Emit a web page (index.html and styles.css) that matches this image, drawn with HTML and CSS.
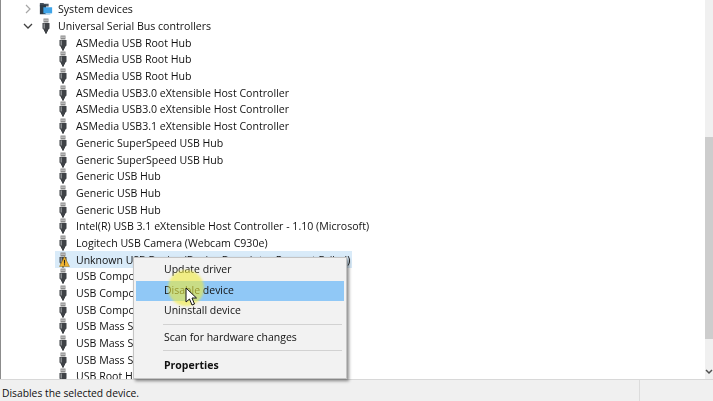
FILE: index.html
```html
<!DOCTYPE html>
<html lang="en">
<head>
<meta charset="utf-8">
<title>Device Manager</title>
<link rel="stylesheet" href="styles.css">
</head>
<body>
<svg class="defs" width="0" height="0" aria-hidden="true">
  <defs>
    <symbol id="usb" viewBox="0 0 12 16">
      <rect x="3.5" y="0.5" width="5" height="4" fill="#8b8b8b"/>
      <rect x="4.5" y="1.5" width="1" height="1.5" fill="#e8e8e8"/>
      <rect x="6.5" y="1.5" width="1" height="1.5" fill="#e8e8e8"/>
      <path d="M2.5 5h7v5.5l-1.5 1.5v1.5h-1v2h-2v-2h-1V12l-1.500-1.500z" fill="#3f4246"/>
      <rect x="3.500" y="5.500" width="1.500" height="5" fill="#8a8d90"/>
    </symbol>
  </defs>
</svg>
<div class="app">
  <div class="content">
    <div class="tree">
      <div class="row depth1">
        <svg class="chev" viewBox="0 0 10 10"><path d="M3 1l4 4-4 4" fill="none" stroke="#a6a6a6" stroke-width="1.200"/></svg>
        <svg class="icon" viewBox="0 0 16 16"><path d="M1 1h4l1 1h5v3H1z" fill="#4a5560"/><rect x="1" y="3" width="7" height="11" fill="#2e3b46"/><rect x="5" y="6" width="10" height="7" fill="#3fa4e8"/><rect x="7" y="13" width="6" height="1.500" fill="#9fc9e6"/></svg>
        <span>System devices</span>
      </div>
      <div class="row depth1">
        <svg class="chev" viewBox="0 0 10 10"><path d="M1 3l4 4 4-4" fill="none" stroke="#404040" stroke-width="1.300"/></svg>
        <svg class="icon"><use href="#usb"/></svg>
        <span>Universal Serial Bus controllers</span>
      </div>
      <div class="row depth2"><svg class="icon"><use href="#usb"/></svg><span>ASMedia USB Root Hub</span></div>
      <div class="row depth2"><svg class="icon"><use href="#usb"/></svg><span>ASMedia USB Root Hub</span></div>
      <div class="row depth2"><svg class="icon"><use href="#usb"/></svg><span>ASMedia USB Root Hub</span></div>
      <div class="row depth2"><svg class="icon"><use href="#usb"/></svg><span>ASMedia USB3.0 eXtensible Host Controller</span></div>
      <div class="row depth2"><svg class="icon"><use href="#usb"/></svg><span>ASMedia USB3.0 eXtensible Host Controller</span></div>
      <div class="row depth2"><svg class="icon"><use href="#usb"/></svg><span>ASMedia USB3.1 eXtensible Host Controller</span></div>
      <div class="row depth2"><svg class="icon"><use href="#usb"/></svg><span>Generic SuperSpeed USB Hub</span></div>
      <div class="row depth2"><svg class="icon"><use href="#usb"/></svg><span>Generic SuperSpeed USB Hub</span></div>
      <div class="row depth2"><svg class="icon"><use href="#usb"/></svg><span>Generic USB Hub</span></div>
      <div class="row depth2"><svg class="icon"><use href="#usb"/></svg><span>Generic USB Hub</span></div>
      <div class="row depth2"><svg class="icon"><use href="#usb"/></svg><span>Generic USB Hub</span></div>
      <div class="row depth2"><svg class="icon"><use href="#usb"/></svg><span>Intel(R) USB 3.1 eXtensible Host Controller - 1.10 (Microsoft)</span></div>
      <div class="row depth2"><svg class="icon"><use href="#usb"/></svg><span>Logitech USB Camera (Webcam C930e)</span></div>
      <div class="row depth2 selected">
        <span class="iconwrap">
          <svg class="icon"><use href="#usb"/></svg>
          <svg class="warn" viewBox="0 0 10 10"><path d="M5 .5l4.500 9h-9z" fill="#f2b632" stroke="#8a6a1c" stroke-width=".5"/><rect x="4.500" y="3.500" width="1" height="3.500" fill="#222"/><rect x="4.500" y="7.500" width="1" height="1" fill="#222"/></svg>
        </span>
        <span class="selected-text">Unknown USB Device (Device Descriptor Request Failed)</span>
      </div>
      <div class="row depth2"><svg class="icon"><use href="#usb"/></svg><span>USB Composite Device</span></div>
      <div class="row depth2"><svg class="icon"><use href="#usb"/></svg><span>USB Composite Device</span></div>
      <div class="row depth2"><svg class="icon"><use href="#usb"/></svg><span>USB Composite Device</span></div>
      <div class="row depth2"><svg class="icon"><use href="#usb"/></svg><span>USB Mass Storage Device</span></div>
      <div class="row depth2"><svg class="icon"><use href="#usb"/></svg><span>USB Mass Storage Device</span></div>
      <div class="row depth2"><svg class="icon"><use href="#usb"/></svg><span>USB Mass Storage Device</span></div>
      <div class="row depth2"><svg class="icon"><use href="#usb"/></svg><span>USB Root Hub (USB 3.0)</span></div>
    </div>
    <div class="scrollbar">
      <div class="track-top"></div>
      <div class="thumb"></div>
      <div class="track-bottom">
        <svg class="scroll-arrow" viewBox="0 0 8 6"><path d="M1 1l3 3 3-3" fill="none" stroke="#505050" stroke-width="1.500"/></svg>
      </div>
    </div>
  </div>
  <div class="status">
    <div class="status-main">Disables the selected device.</div>
    <div class="status-cell"></div>
  </div>
</div>
<div class="menu">
  <div class="item">Update driver</div>
  <div class="item active">Disable device</div>
  <div class="item">Uninstall device</div>
  <div class="sep"></div>
  <div class="item scan">Scan for hardware changes</div>
  <div class="sep"></div>
  <div class="item strong">Properties</div>
</div>
<div class="spot"></div>
<svg class="cursor" viewBox="0 0 12 19"><path d="M1 1v14l3.500-3 2.500 6 2.500-1-2.500-6h4.500z" fill="#fff" stroke="#111" stroke-width="1"/></svg>
</body>
</html>
```
FILE: styles.css
```css
* { box-sizing: border-box; }
html, body { margin: 0; padding: 0; }
body {
  width: 713px;
  height: 401px;
  overflow: hidden;
  background: #fff;
  font-family: "Open Sans", "Noto Sans", sans-serif;
  font-size: 10.6px;
  color: #111;
  position: relative;
}
.defs { position: absolute; }
.app {
  width: 713px;
  height: 401px;
  display: flex;
  flex-direction: column;
  filter: blur(0.35px);
}
.content {
  flex: 0 0 379px;
  height: 379px;
  display: flex;
  overflow: hidden;
  border-left: 1px solid #8c8c8c;
}
.tree {
  flex: 1;
  padding-top: 1px;
  overflow: hidden;
}
.row {
  height: 16.7px;
  display: flex;
  align-items: center;
  white-space: nowrap;
}
.depth1 { padding-left: 22px; }
.depth2 { padding-left: 56px; }
.chev { width: 10px; height: 10px; flex: none; margin-right: 6px; }
.icon { width: 12px; height: 16px; flex: none; margin-right: 7px; }
.depth1 .icon { width: 14px; height: 16px; margin-right: 5px; }
.selected {
  background: #d9ebf9;
  width: 297px;
  margin-left: 54px;
  padding-left: 2px;
}
.selected-text { font-size: 10.5px; }
.iconwrap { position: relative; display: flex; flex: none; }
.warn { position: absolute; left: 2px; top: 4px; width: 11px; height: 11px; }
.scrollbar {
  flex: 0 0 8px;
  display: flex;
  flex-direction: column;
  background: #f0f0f0;
}
.track-top { height: 137px; }
.thumb { height: 202px; background: #cdcdcd; }
.track-bottom { flex: 1; position: relative; display: flex; align-items: flex-end; padding-bottom: 4px; }
.scroll-arrow { width: 8px; height: 6px; }
.status {
  flex: 1;
  display: flex;
  background: #f0f0f0;
  border-top: 1px solid #d8d8d8;
}
.status-main {
  flex: 0 0 640px;
  padding: 6px 0 0 2px;
  font-size: 10.3px;
  border-right: 1px solid #dcdcdc;
}
.status-cell { flex: 1; }
.menu {
  position: absolute;
  left: 133px;
  top: 257px;
  width: 214px;
  height: 122px;
  padding: 2px;
  background: #f2f2f2;
  border: 1px solid #c4c4c4;
  box-shadow: 2px 2px 3px rgba(0,0,0,.45);
  filter: blur(0.35px);
}
.item {
  height: 20.500px;
  line-height: 18px;
  padding-left: 28px;
  color: #111;
  font-size: 10.5px;
}
.item.active { background: #90c8f6; }
.item.scan { line-height: 19px; }
.item.strong { font-weight: 700; line-height: 22px; }
.sep {
  height: 1px;
  margin: 2px 2px 3px 27px;
  background: #d2d2d2;
}
.spot {
  position: absolute;
  left: 168px;
  top: 270px;
  width: 36px;
  height: 36px;
  border-radius: 50%;
  background: rgba(240,235,60,.6);
  filter: blur(1px);
}
.cursor {
  position: absolute;
  left: 185px;
  top: 287px;
  width: 12px;
  height: 19px;
}
```
